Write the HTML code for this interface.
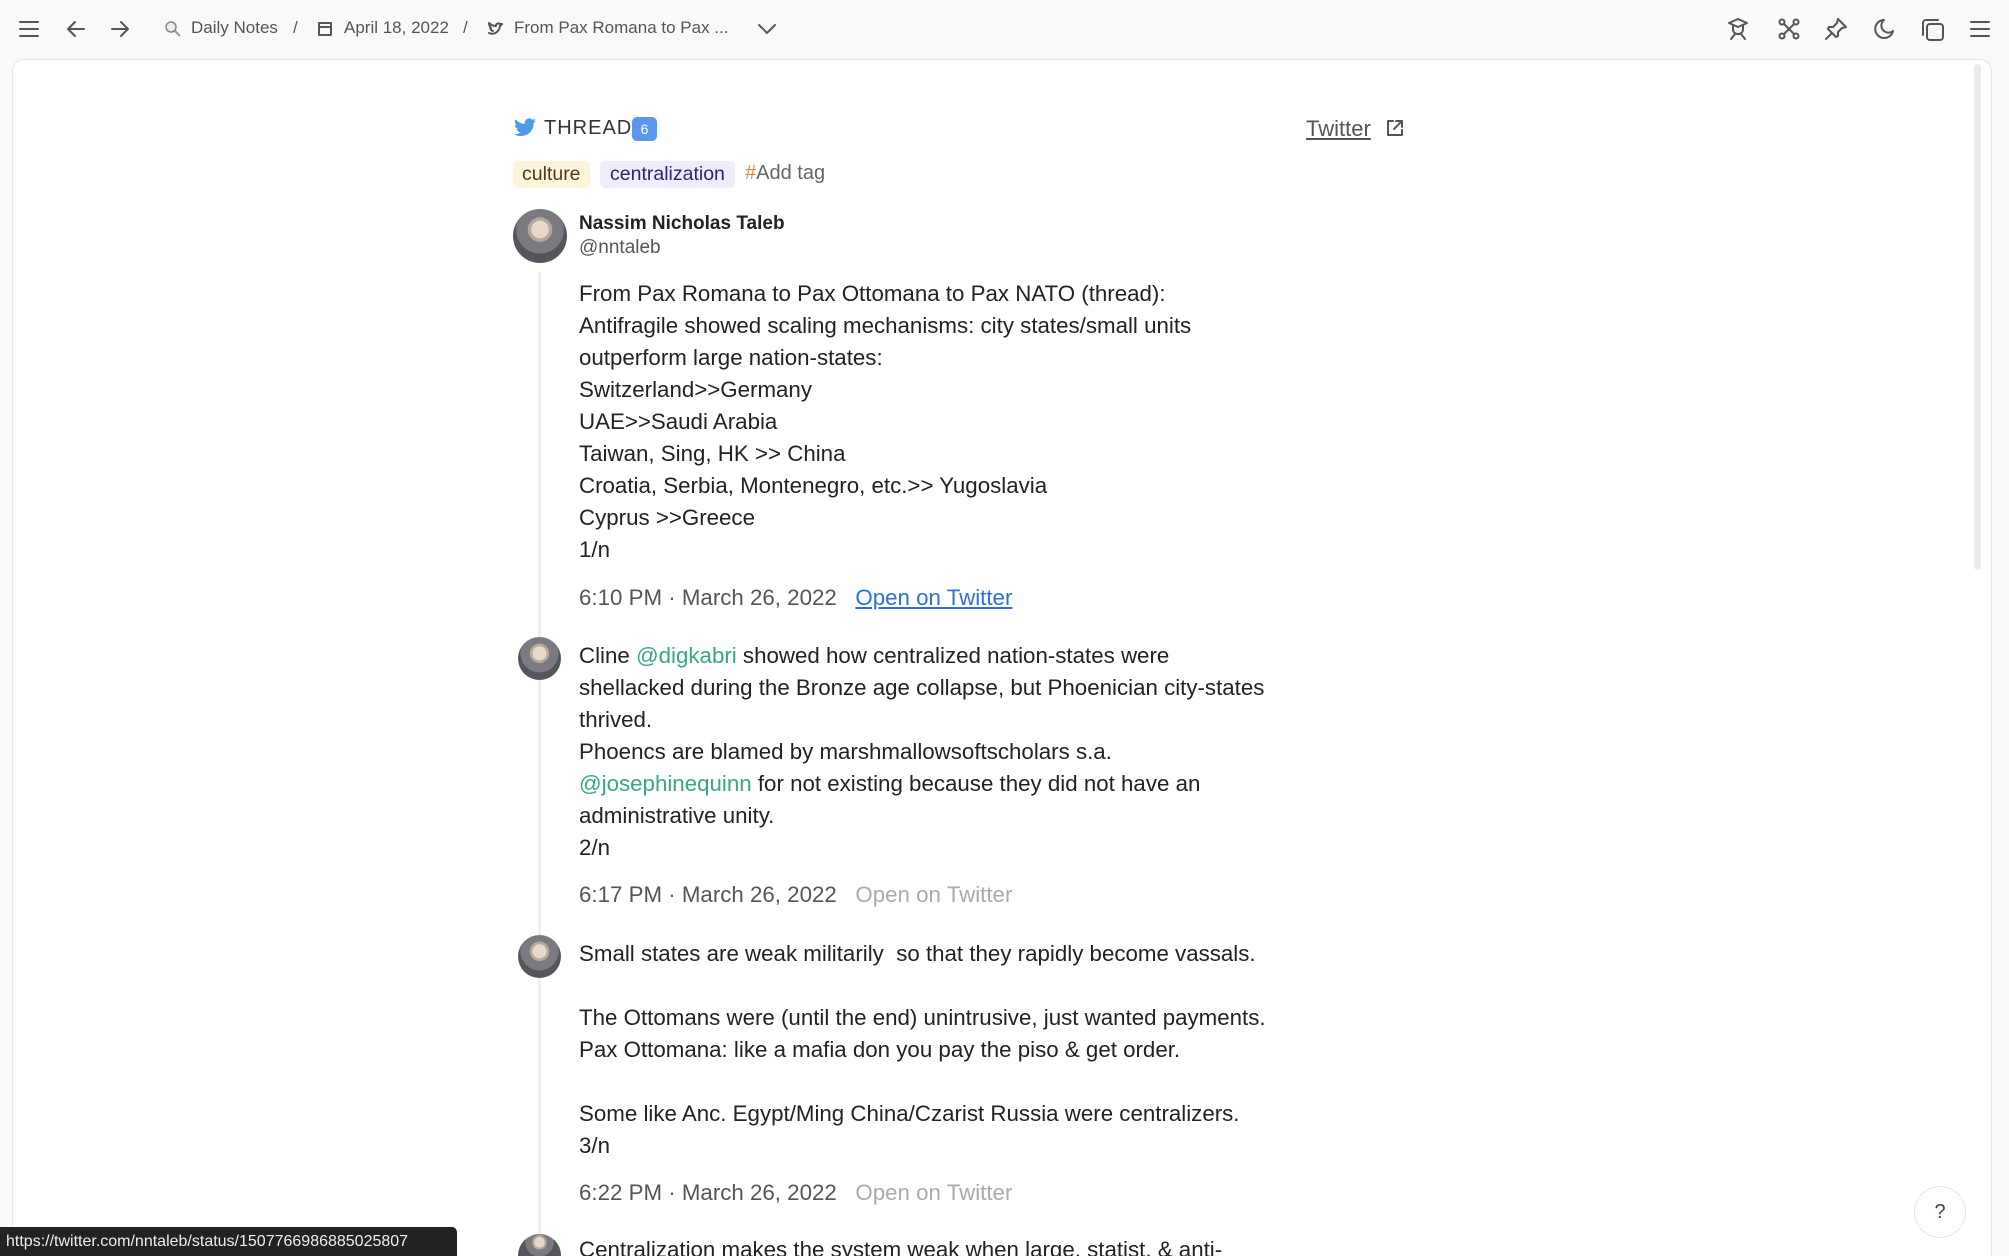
<!DOCTYPE html>
<html style="height:1256px;overflow:hidden"><head><meta charset="utf-8"><style>
*{margin:0;padding:0;box-sizing:border-box}
body{width:2009px;height:1256px;overflow:hidden;background:#faf9f8;font-family:"Liberation Sans",sans-serif;color:#222;position:relative}
.a{position:absolute}
.top{color:#555;font-size:17px;top:18px}
.card{left:12px;top:59px;width:1980px;height:1197px;background:#fff;border:1px solid #e8e6e3;border-bottom:none;border-radius:12px 12px 0 0}
.t{left:579px;font-size:22.3px;line-height:32px;white-space:nowrap;color:#222}
.ts{font-size:22.3px;color:#555;white-space:nowrap;left:579px;line-height:32px}
.m{color:#3aa58a}
.av{border-radius:50%;background:radial-gradient(circle at 50% 38%,#e8d8cc 0 20%,#b8a89c 21% 28%,#7a7a80 29% 55%,#55555c 56%);}
.ic{stroke:#555;fill:none;stroke-width:2;stroke-linecap:round;stroke-linejoin:round}
</style></head><body>
<svg class="a" style="left:18px;top:18px" width="24" height="22"><path class="ic" d="M2 4h18M2 11h18M2 18h18"/></svg>
<svg class="a" style="left:64px;top:17px" width="24" height="24"><path class="ic" d="M20 12H4M11 5l-7 7 7 7"/></svg>
<svg class="a" style="left:108px;top:17px" width="24" height="24"><path class="ic" d="M4 12h16M13 5l7 7-7 7"/></svg>
<svg class="a" style="left:164px;top:20px" width="18" height="18"><circle cx="7" cy="7" r="5" stroke="#888" fill="#eee" stroke-width="1.5"/><path d="M11 11l5 5" stroke="#999" stroke-width="2"/></svg>
<div class="a top" style="left:191px">Daily Notes</div>
<div class="a top" style="left:293px">/</div>
<svg class="a" style="left:318px;top:21px" width="15" height="16"><rect x="1" y="2" width="12" height="12" class="ic" stroke-width="1.3"/><path d="M1 6h12" class="ic" stroke-width="1.3"/></svg>
<div class="a top" style="left:344px">April 18, 2022</div>
<div class="a top" style="left:463px">/</div>
<svg class="a" style="left:487px;top:21px" width="17" height="16"><path class="ic" stroke-width="1.3" d="M2 12c4 2 10 0 11-7l2-2-2 0c-1-1-4-1-4 2-3 0-5-1-7-3 0 3 1 4 2 5-2 0 1 3 2 3"/></svg>
<div class="a top" style="left:514px">From Pax Romana to Pax ...</div>
<svg class="a" style="left:756px;top:20px" width="22" height="18"><path class="ic" d="M3 5l8 8 8-8"/></svg>
<svg class="a" style="left:1726px;top:17px" width="24" height="24"><path class="ic" d="M3 6l9-4 9 4-9 4zM7 8v4c0 3 2 5 5 5s5-2 5-5V8M5 22l4-5M19 22l-4-5"/></svg>
<svg class="a" style="left:1777px;top:17px" width="24" height="24"><circle class="ic" cx="5" cy="5" r="2.5"/><circle class="ic" cx="19" cy="5" r="2.5"/><circle class="ic" cx="5" cy="19" r="2.5"/><circle class="ic" cx="19" cy="19" r="2.5"/><path class="ic" d="M7 7l10 10M17 7L7 17"/></svg>
<svg class="a" style="left:1824px;top:17px" width="24" height="24"><path class="ic" d="M14 2l8 8-4 1-4 4 0 4-2 1-8-8 1-2 4 0 4-4zM7 17l-5 5"/></svg>
<svg class="a" style="left:1872px;top:17px" width="24" height="24"><path class="ic" d="M12 3a9 9 0 1 0 9 11A7 7 0 0 1 12 3z"/></svg>
<svg class="a" style="left:1920px;top:17px" width="26" height="26"><rect class="ic" x="7" y="7" width="16" height="16" rx="3"/><path class="ic" d="M18 3H6a3 3 0 0 0-3 3v12"/></svg>
<svg class="a" style="left:1969px;top:18px" width="24" height="22"><path class="ic" d="M2 4h18M2 11h18M2 18h18"/></svg>

<div class="a card"></div>
<div class="a" style="left:1974px;top:64px;width:7px;height:506px;border-radius:4px;background:#ecebea"></div>

<svg class="a" style="left:513px;top:118px" width="24" height="20" viewBox="0 0 24 20"><path fill="#4a9be8" d="M23 2.5c-.8.4-1.7.6-2.6.7.9-.6 1.6-1.4 2-2.5-.9.5-1.9.9-2.9 1.1A4.5 4.5 0 0 0 11.8 5.9 12.8 12.8 0 0 1 2.5 1.2a4.5 4.5 0 0 0 1.4 6c-.7 0-1.4-.2-2-.6 0 2.2 1.5 4 3.6 4.4-.7.2-1.4.2-2 .1.6 1.8 2.3 3.1 4.2 3.1A9 9 0 0 1 1 16.1 12.8 12.8 0 0 0 20.7 5.3v-.6c.9-.6 1.6-1.4 2.3-2.2z"/></svg>
<div class="a" style="left:544px;top:117px;font-size:20px;letter-spacing:1px;color:#333">THREAD</div>
<div class="a" style="left:632px;top:117px;width:25px;height:24px;border-radius:5px;background:#5b97ec;color:#fff;font-size:14px;text-align:center;line-height:24px">6</div>
<div class="a" style="left:1306px;top:116px;font-size:22px;color:#555;text-decoration:underline">Twitter</div>
<svg class="a" style="left:1385px;top:118px" width="20" height="20"><path class="ic" d="M8 3H3v14h14v-5M11 3h6v6M17 3l-8 8"/></svg>

<div class="a" style="left:513px;top:161px;height:27px;padding:0 9px;border-radius:5px;background:#fdf4dc;color:#4a3a20;font-size:19.5px;line-height:27px">culture</div>
<div class="a" style="left:600px;top:161px;height:27px;padding:0 10px;border-radius:5px;background:#efecfb;color:#2c2470;font-size:19.5px;line-height:27px">centralization</div>
<div class="a" style="left:745px;top:162px;font-size:20px;color:#666"><span style="color:#e08a3c">#</span>Add tag</div>

<div class="a av" style="left:513px;top:209px;width:54px;height:54px"></div>
<div class="a" style="left:579px;top:213px;font-size:19px;font-weight:bold;color:#222">Nassim Nicholas Taleb</div>
<div class="a" style="left:579px;top:237px;font-size:19px;color:#555">@nntaleb</div>

<div class="a" style="left:538px;top:272px;width:3px;height:984px;background:#f0efed"></div>

<div class="a t" style="top:278px">From Pax Romana to Pax Ottomana to Pax NATO (thread):<br>Antifragile showed scaling mechanisms: city states/small units<br>outperform large nation-states:<br>Switzerland&gt;&gt;Germany<br>UAE&gt;&gt;Saudi Arabia<br>Taiwan, Sing, HK &gt;&gt; China<br>Croatia, Serbia, Montenegro, etc.&gt;&gt; Yugoslavia<br>Cyprus &gt;&gt;Greece<br>1/n</div>
<div class="a ts" style="top:582px">6:10 PM · March 26, 2022 &nbsp;&nbsp;<span style="color:#2f6fd6;text-decoration:underline">Open on Twitter</span></div>

<div class="a av" style="left:518px;top:637px;width:43px;height:43px"></div>
<div class="a t" style="top:640px">Cline <span class="m">@digkabri</span> showed how centralized nation-states were<br>shellacked during the Bronze age collapse, but Phoenician city-states<br>thrived.<br>Phoencs are blamed by marshmallowsoftscholars s.a.<br><span class="m">@josephinequinn</span> for not existing because they did not have an<br>administrative unity.<br>2/n</div>
<div class="a ts" style="top:879px">6:17 PM · March 26, 2022 &nbsp;&nbsp;<span style="color:#aaa">Open on Twitter</span></div>

<div class="a av" style="left:518px;top:935px;width:43px;height:43px"></div>
<div class="a t" style="top:938px">Small states are weak militarily &nbsp;so that they rapidly become vassals.<br><br>The Ottomans were (until the end) unintrusive, just wanted payments.<br>Pax Ottomana: like a mafia don you pay the piso &amp; get order.<br><br>Some like Anc. Egypt/Ming China/Czarist Russia were centralizers.<br>3/n</div>
<div class="a ts" style="top:1177px">6:22 PM · March 26, 2022 &nbsp;&nbsp;<span style="color:#aaa">Open on Twitter</span></div>

<div class="a av" style="left:518px;top:1234px;width:43px;height:22px;border-radius:22px 22px 0 0"></div>
<div class="a t" style="top:1234px;height:22px;overflow:hidden">Centralization makes the system weak when large, statist, &amp; anti-</div>

<div class="a" style="left:0;top:1227px;width:457px;height:29px;background:#222;border-radius:0 5px 0 0;color:#eee;font-size:16px;line-height:29px;padding-left:6px">https://twitter.com/nntaleb/status/1507766986885025807</div>
<div class="a" style="left:1914px;top:1186px;width:52px;height:52px;border-radius:50%;border:1px solid #e5e5e5;background:#fff;text-align:center;line-height:50px;font-size:20px;color:#444">?</div>
</body></html>
